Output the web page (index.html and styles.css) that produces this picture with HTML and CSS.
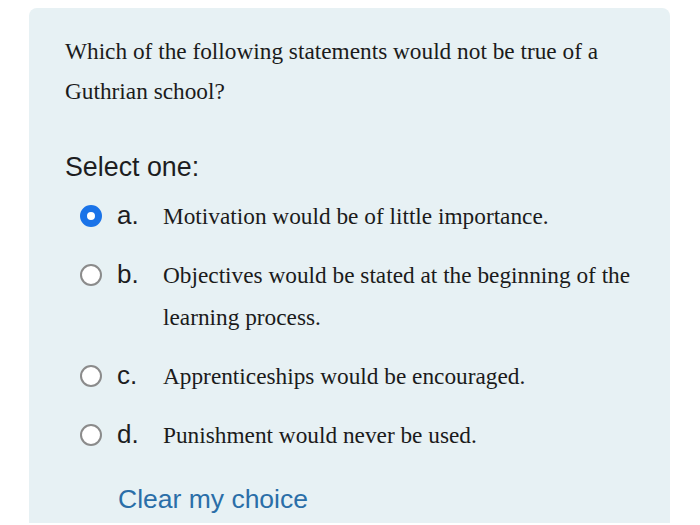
FILE: index.html
```html
<!DOCTYPE html>
<html lang="en">
<head>
  <meta charset="UTF-8">
  <title>Quiz question</title>
  <link rel="stylesheet" href="styles.css">
</head>
<body>
  <div class="question-card">
    <p class="qtext">Which of the following statements would not be true of a Guthrian school?</p>

    <div class="prompt">Select one:</div>

    <div class="answers">
      <label class="answer">
        <span class="radio checked"></span>
        <span class="letter">a.</span>
        <span class="answer-text">Motivation would be of little importance.</span>
      </label>
      <label class="answer">
        <span class="radio"></span>
        <span class="letter">b.</span>
        <span class="answer-text">Objectives would be stated at the beginning of the learning process.</span>
      </label>
      <label class="answer">
        <span class="radio"></span>
        <span class="letter">c.</span>
        <span class="answer-text">Apprenticeships would be encouraged.</span>
      </label>
      <label class="answer">
        <span class="radio"></span>
        <span class="letter">d.</span>
        <span class="answer-text">Punishment would never be used.</span>
      </label>
    </div>

    <a class="clear-choice" href="#">Clear my choice</a>
  </div>
</body>
</html>
```

FILE: styles.css
```css
* {
  box-sizing: border-box;
}

body {
  margin: 0;
  background: #ffffff;
  font-family: 'Liberation Sans', Arial, sans-serif;
  color: #1d1d1f;
}

.question-card {
  margin: 8px 30px 0 29px;
  height: 515px;
  background: #e7f1f4;
  border-radius: 8px 8px 0 0;
  padding: 23px 36px 0 36px;
}

.qtext {
  margin: 0;
  font-family: 'Liberation Serif', 'Times New Roman', serif;
  font-size: 23.3px;
  line-height: 40px;
  color: #1b1b1b;
  padding-right: 20px;
}

.prompt {
  margin-top: 40px;
  font-size: 26.8px;
  line-height: 32px;
  color: #1d1d1f;
}

.answers {
  margin-top: 4px;
}

.answer {
  display: flex;
  align-items: flex-start;
  padding: 8px 0 9px 15px;
}

.radio {
  flex: none;
  width: 22px;
  height: 22px;
  margin-top: 10px;
  border-radius: 50%;
  border: 2px solid #8b8b8b;
  background: #ffffff;
}

.radio.checked {
  border: 7px solid #1a73e8;
  background: #ffffff;
}

.letter {
  flex: none;
  width: 46px;
  margin-left: 15px;
  font-size: 26px;
  line-height: 40px;
}

.answer-text {
  font-family: 'Liberation Serif', 'Times New Roman', serif;
  font-size: 23.3px;
  line-height: 42px;
  color: #1b1b1b;
}

.clear-choice {
  display: inline-block;
  margin: 18px 0 0 53px;
  font-size: 26.5px;
  line-height: 32px;
  color: #2a6ea8;
  text-decoration: none;
}
```
